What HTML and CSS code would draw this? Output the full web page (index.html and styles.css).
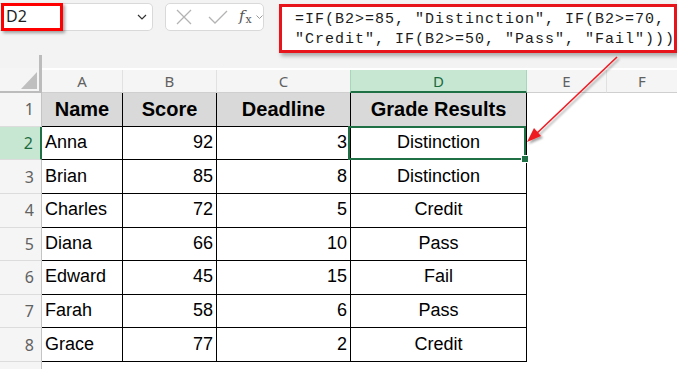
FILE: index.html
```html
<!DOCTYPE html>
<html lang="en">
<head>
  <meta charset="UTF-8">
  <meta name="viewport" content="width=device-width, initial-scale=1.0">
  <title>Grade Results</title>
  <link rel="stylesheet" href="styles.css">
</head>
<body>
  <div class="toolbar">
    <div class="namebox">
      <span class="nb-value">D2</span>
      <svg class="chev" width="10" height="6" viewBox="0 0 10 6"><polyline points="1,1 5,5 9,1" fill="none" stroke="#333" stroke-width="1.2"/></svg>
    </div>
    <div class="fx-tools">
      <svg width="16" height="16" viewBox="0 0 16 16"><path d="M1 1 L15 15 M15 1 L1 15" stroke="#b3b3b3" stroke-width="1.3" fill="none"/></svg>
      <svg width="20" height="14" viewBox="0 0 20 14"><polyline points="1,7 7,13 19,1" stroke="#b3b3b3" stroke-width="1.3" fill="none"/></svg>
      <span class="fx"><i>f</i><sub>x</sub></span>
      <svg width="7" height="4" viewBox="0 0 7 4"><polyline points="0.5,0.5 3.5,3.5 6.5,0.5" fill="none" stroke="#999" stroke-width="1"/></svg>
    </div>
    <div class="formula">=IF(B2&gt;=85, "Distinction", IF(B2&gt;=70,
"Credit", IF(B2&gt;=50, "Pass", "Fail")))</div>
  </div>

  <div class="sheet">
    <div class="corner"><svg width="16" height="17" viewBox="0 0 16 17"><polygon points="16,0 16,17 0,17" fill="#bfbfbf"/></svg></div>
    <div class="ch">A</div>
    <div class="ch">B</div>
    <div class="ch">C</div>
    <div class="ch ch-sel">D</div>
    <div class="ch">E</div>
    <div class="ch ch-last">F</div>

    <div class="rh">1</div>
    <div class="c hd">Name</div>
    <div class="c hd">Score</div>
    <div class="c hd">Deadline</div>
    <div class="c hd">Grade Results</div>
    <div class="e"></div><div class="e"></div>

    <div class="rh rh-sel">2</div>
    <div class="c">Anna</div>
    <div class="c num">92</div>
    <div class="c num">3</div>
    <div class="c mid active">Distinction</div>
    <div class="e"></div><div class="e"></div>

    <div class="rh">3</div>
    <div class="c">Brian</div>
    <div class="c num">85</div>
    <div class="c num">8</div>
    <div class="c mid">Distinction</div>
    <div class="e"></div><div class="e"></div>

    <div class="rh">4</div>
    <div class="c">Charles</div>
    <div class="c num">72</div>
    <div class="c num">5</div>
    <div class="c mid">Credit</div>
    <div class="e"></div><div class="e"></div>

    <div class="rh">5</div>
    <div class="c">Diana</div>
    <div class="c num">66</div>
    <div class="c num">10</div>
    <div class="c mid">Pass</div>
    <div class="e"></div><div class="e"></div>

    <div class="rh">6</div>
    <div class="c">Edward</div>
    <div class="c num">45</div>
    <div class="c num">15</div>
    <div class="c mid">Fail</div>
    <div class="e"></div><div class="e"></div>

    <div class="rh">7</div>
    <div class="c">Farah</div>
    <div class="c num">58</div>
    <div class="c num">6</div>
    <div class="c mid">Pass</div>
    <div class="e"></div><div class="e"></div>

    <div class="rh">8</div>
    <div class="c">Grace</div>
    <div class="c num">77</div>
    <div class="c num">2</div>
    <div class="c mid">Credit</div>
    <div class="e"></div><div class="e"></div>

    <div class="rh rh-end"></div>
  </div>

  <svg class="arrow" width="677" height="369" viewBox="0 0 677 369">
    <defs>
      <filter id="sh" x="-20%" y="-20%" width="140%" height="140%">
        <feDropShadow dx="2" dy="2" stdDeviation="1.2" flood-color="#000" flood-opacity="0.35"/>
      </filter>
    </defs>
    <g filter="url(#sh)">
      <line x1="617" y1="57" x2="535" y2="135" stroke="#ee1c24" stroke-width="1.6"/>
      <polygon points="527,142 541,136 534,128" fill="#ee1c24"/>
    </g>
  </svg>
</body>
</html>
```

FILE: styles.css
```css
body {
  margin: 0;
  font-family: "Liberation Sans", Arial, sans-serif;
  background: #fff;
  width: 677px;
  height: 369px;
  overflow: hidden;
  position: relative;
}
.toolbar {
  height: 68px;
  display: flex;
  align-items: flex-start;
  background: #f3f3f3;
}
.namebox {
  margin-top: 3px;
  width: 153px;
  height: 28px;
  box-sizing: border-box;
  background: #fff;
  border: 1px solid #d9d9d9;
  border-left: none;
  border-radius: 0 5px 5px 0;
  display: flex;
  align-items: center;
  justify-content: space-between;
  padding-right: 5px;
}
.nb-value {
  box-sizing: border-box;
  width: 62px;
  height: 28px;
  margin: -1px 0 0 1px;
  border: 3px solid #f00;
  padding-left: 2px;
  font-family: "Noto Sans", sans-serif;
  font-size: 16px;
  line-height: 21px;
  color: #1f1f1f;
  box-shadow: 2px 2px 3px rgba(0, 0, 0, 0.35);
}
.fx-tools {
  margin: 3px 0 0 12px;
  width: 99px;
  height: 28px;
  box-sizing: border-box;
  background: #fff;
  border: 1px solid #d9d9d9;
  border-radius: 5px;
  display: flex;
  align-items: center;
  padding: 0 0 0 10px;
}
.fx-tools svg:first-child {
  margin-right: 16px;
}
.fx-tools svg:nth-child(2) {
  margin-right: 11px;
}
.fx {
  font-family: "DejaVu Serif", serif;
  font-size: 15px;
  color: #555;
  margin-right: 4px;
  line-height: 1;
}
.fx sub {
  font-size: 11px;
  font-style: normal;
  vertical-align: -2px;
  margin-left: 1px;
}
.formula {
  margin: 4px 0 0 15px;
  width: 398px;
  height: 49px;
  box-sizing: border-box;
  border: 3px solid #e8141b;
  background: #fff;
  padding: 3px 0 0 13px;
  font-family: "Liberation Mono", monospace;
  font-size: 15px;
  letter-spacing: 1px;
  line-height: 20px;
  color: #1b1b1b;
  white-space: pre;
  overflow: hidden;
  box-shadow: 2px 3px 4px rgba(0, 0, 0, 0.3);
}
.sheet {
  display: grid;
  grid-template-columns: 42px 81px 94px 134px 176px 80px 1fr;
  grid-template-rows: 25px repeat(8, 33.625px) 1fr;
  height: 301px;
}
.sheet > div {
  box-sizing: border-box;
}
.corner {
  position: relative;
  background: #f5f5f5;
  border-right: 3px solid #bcbcbc;
  border-bottom: 2px solid #bcbcbc;
  display: flex;
  align-items: flex-end;
  justify-content: flex-end;
  padding: 0 2px 2px 0;
}
.corner::before {
  content: "";
  position: absolute;
  right: -3px;
  top: -13px;
  width: 3px;
  height: 13px;
  background: #bcbcbc;
}
.ch {
  background: #f5f5f5;
  border-right: 1px solid #e1e1e1;
  border-bottom: 1px solid #cfcfcf;
  margin-top: 2px;
  display: flex;
  align-items: center;
  justify-content: center;
  font-family: "Noto Sans", sans-serif;
  font-size: 15px;
  color: #616161;
}
.ch-last {
  border-right: none;
}
.ch-sel {
  background: #c7e7d2;
  color: #1c6b3f;
  border-left: 1px solid #a7d7b9;
  border-right: 1px solid #a7d7b9;
  border-bottom: 2px solid #1f7145;
  margin-left: -1px;
}
.rh {
  background: #f5f5f5;
  border-right: 1px solid #c4c4c4;
  border-bottom: 1px solid #dcdcdc;
  display: flex;
  align-items: center;
  justify-content: flex-end;
  padding-right: 7px;
  font-family: "Noto Sans", sans-serif;
  font-size: 16px;
  color: #616161;
}
.rh-sel {
  background: #c7e7d2;
  color: #1c6b3f;
  border-right: 2px solid #1f7145;
}
.rh-end {
  border-bottom: none;
}
.c {
  border-right: 1px solid #000;
  border-bottom: 1px solid #000;
  display: flex;
  align-items: center;
  padding: 0 3px 1px;
  font-size: 18px;
  color: #000;
  white-space: nowrap;
}
.hd {
  background: #d9d9d9;
  font-weight: bold;
  font-size: 20px;
  justify-content: center;
  padding-bottom: 0;
}
.num {
  justify-content: flex-end;
}
.mid {
  justify-content: center;
}
.active {
  position: relative;
}
.active::after {
  content: "";
  position: absolute;
  top: -1px;
  left: -3px;
  right: 0;
  bottom: -1px;
  border: 2px solid #1f7145;
}
.active::before {
  content: "";
  position: absolute;
  right: -3px;
  bottom: -4px;
  width: 6px;
  height: 6px;
  background: #1f7145;
  border: 1px solid #fff;
  z-index: 1;
}
.e {
  background: #fff;
}
.arrow {
  position: absolute;
  left: 0;
  top: 0;
  pointer-events: none;
}
```
